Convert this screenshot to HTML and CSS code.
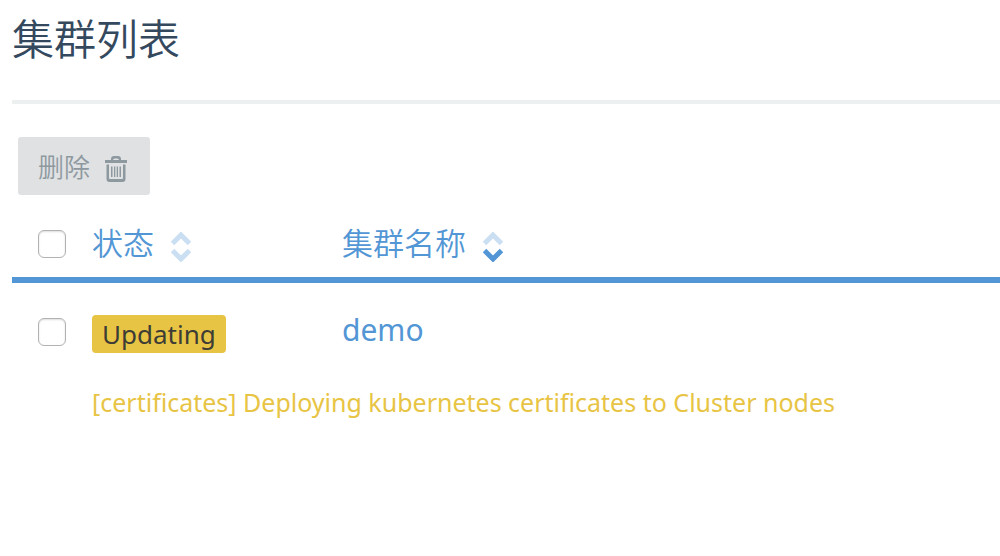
FILE: index.html
```html
<!DOCTYPE html>
<html lang="zh-CN">
<head>
<meta charset="utf-8">
<title>集群列表</title>
<link rel="stylesheet" href="styles.css">
</head>
<body>
<main class="page">
  <header class="page-header"><h1>集群列表</h1></header>
  <div class="toolbar">
    <button class="delete" type="button" disabled>
      <span>删除</span>
      <svg class="trash" viewBox="0 0 22 26" aria-hidden="true">
        <path d="M0 4h6V3q0-3 3-3h4q3 0 3 3v1h6v3H0zM8 4h6q0-1.500-2-1.500h-2q-2 0-2 1.500z" fill-rule="evenodd"/>
        <path d="M1.500 8.500H4V22q0 1 1 1h12q1 0 1-1V8.500h2.500V23q0 3-3 3h-13q-3 0-3-3z"/>
        <path d="M6 10.500h1.500v10.500H6zM9 10.500h1.300v10.500H9zM11.700 10.500H13v10.500h-1.300zM14.500 10.500H16v10.500h-1.500z"/>
      </svg>
    </button>
  </div>
  <table class="clusters">
    <thead>
      <tr>
        <th class="pick"><input type="checkbox" aria-label="全选"></th>
        <th class="state"><button class="sort" type="button">状态
          <svg viewBox="0 0 20 30" aria-hidden="true"><path class="off" d="M1.500 11.500 10 3l8.500 8.500M1.500 18.500 10 27l8.500-8.500"/></svg>
        </button></th>
        <th class="name"><button class="sort" type="button">集群名称
          <svg viewBox="0 0 20 30" aria-hidden="true"><path class="off" d="M1.500 11.500 10 3l8.500 8.500"/><path class="on" d="M1.500 18.500 10 27l8.500-8.500"/></svg>
        </button></th>
      </tr>
    </thead>
    <tbody>
      <tr>
        <td class="pick"><input type="checkbox" aria-label="demo"></td>
        <td class="state"><span class="badge">Updating</span></td>
        <td class="name"><a href="#demo">demo</a></td>
      </tr>
      <tr>
        <td></td>
        <td class="message" colspan="2">[certificates] Deploying kubernetes certificates to Cluster nodes</td>
      </tr>
    </tbody>
  </table>
</main>
</body>
</html>
```
FILE: styles.css
```css
* { box-sizing: border-box; }

body {
  margin: 0;
  background: #fff;
  color: #34495e;
  font-family: "Noto Sans", "Noto Sans CJK SC", sans-serif;
}

.page { padding-left: 12px; }

.page-header {
  padding: 5px 0 31px;
  border-bottom: 4px solid #ecf0f0;
}

.page-header h1 {
  margin: 0;
  font-family: "Noto Sans CJK SC", sans-serif;
  font-size: 42px;
  line-height: 64px;
  font-weight: 350;
}

.toolbar { padding: 33px 6px 0; }

.delete {
  display: flex;
  align-items: center;
  gap: 15px;
  height: 58px;
  padding: 0 23px 0 20px;
  border: 0;
  border-radius: 3px;
  background: #dfe1e3;
  color: #8e999f;
  font: 350 26px/40px "Noto Sans CJK SC", sans-serif;
}

.trash { width: 22px; height: 26px; margin-top: 6px; fill: #8e999f; }

.clusters {
  width: 100%;
  table-layout: fixed;
  border-collapse: collapse;
}

th, td { padding: 0; text-align: left; vertical-align: top; }

thead tr { height: 85px; border-bottom: 6px solid #5296d5; }

th.pick, td.pick { width: 80px; padding-left: 26px; }
th.state { width: 250px; }
th.pick { padding-top: 35px; }
th.state, th.name { padding-top: 24px; }

.pick input {
  appearance: none;
  display: block;
  width: 28px;
  height: 28px;
  margin: 0;
  border: 1px solid #b2b2b2;
  border-radius: 6px;
  background: #fff;
  box-shadow: inset 0 1px 2px #ddd;
}

.sort {
  display: flex;
  align-items: center;
  gap: 17px;
  padding: 0;
  border: 0;
  background: none;
  color: #5296d5;
  font: 350 31px/46px "Noto Sans CJK SC", sans-serif;
}

.sort svg {
  width: 20px;
  height: 30px;
  margin-top: 10px;
  fill: none;
  stroke-width: 5;
}

.off { stroke: #cbdff3; }
.on { stroke: #5296d5; }

tbody td { padding-top: 32px; }
tbody td.pick { padding-top: 35px; }

.badge {
  display: block;
  width: fit-content;
  padding: 0 10px;
  border-radius: 4px;
  background: #e8c444;
  color: #3d3d35;
  font-size: 26px;
  line-height: 38px;
}

.name a {
  display: block;
  color: #5296d5;
  font-size: 30px;
  line-height: 30px;
  text-decoration: none;
}

.message {
  color: #e8c444;
  font-size: 25px;
  line-height: 34px;
}
```
